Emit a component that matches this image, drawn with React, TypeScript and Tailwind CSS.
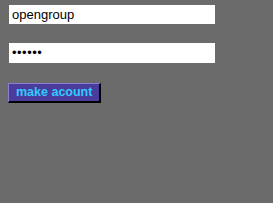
export default function App() {
  return (
    <div className="h-[203px] w-[273px] bg-[#6b6b6b] pl-[9px] pt-[5px] font-['Liberation_Sans',Arial,sans-serif]">
      <div className="flex h-[19px] w-[206px] items-center bg-white pl-[3px] text-[13px] text-black">
        opengroup
      </div>
      <div className="mt-[19px] flex h-[20px] w-[206px] items-center bg-white pl-[3px] text-[13px] tracking-[0.5px] text-black">
        ••••••
      </div>
      <div className="mt-[20px] -ml-[1px] flex">
        <div className="flex h-[20px] items-center border-r-2 border-b-2 border-t border-l border-r-black border-b-black border-t-[#8a7fd0] border-l-[#8a7fd0] bg-[#4a3b9c] px-[7px] text-[12.5px] font-bold text-[#33ccff]">
          make acount
        </div>
      </div>
    </div>
  );
}
